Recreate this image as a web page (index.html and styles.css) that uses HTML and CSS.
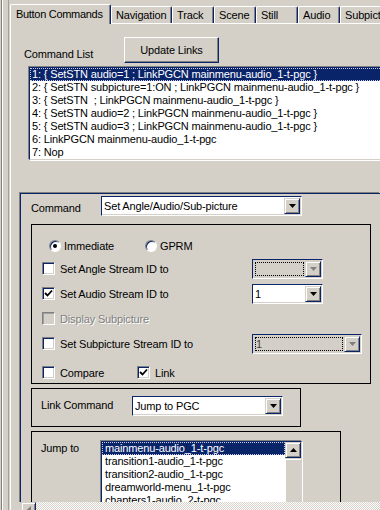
FILE: index.html
```html
<!DOCTYPE html>
<html lang="en">
<head>
    <meta charset="UTF-8">
    <title>Button Commands</title>
    <link rel="stylesheet" href="styles.css">
</head>
<body>

<div class="window">
    <div class="edge"></div>

    <div class="tabctl">
        <!-- Tab strip -->
        <div class="tabs">
            <div class="tab active">Button Commands</div>
            <div class="tab nav">Navigation</div>
            <div class="tab">Track</div>
            <div class="tab">Scene</div>
            <div class="tab">Still</div>
            <div class="tab">Audio</div>
            <div class="tab last">Subpicture</div>
        </div>

        <div class="panel">
            <div class="list-head">
                <span class="label head-label">Command List</span>
                <button class="btn">Update Links</button>
            </div>

            <div class="listbox cmd-list">
                <div class="item sel">1: { SetSTN audio=1 ; LinkPGCN mainmenu-audio_1-t-pgc }</div>
                <div class="item">2: { SetSTN subpicture=1:ON ; LinkPGCN mainmenu-audio_1-t-pgc }</div>
                <div class="item">3: { SetSTN&nbsp; ; LinkPGCN mainmenu-audio_1-t-pgc }</div>
                <div class="item">4: { SetSTN audio=2 ; LinkPGCN mainmenu-audio_1-t-pgc }</div>
                <div class="item">5: { SetSTN audio=3 ; LinkPGCN mainmenu-audio_1-t-pgc }</div>
                <div class="item">6: LinkPGCN mainmenu-audio_1-t-pgc</div>
                <div class="item">7: Nop</div>
            </div>

            <!-- Scrolling editor pane -->
            <div class="pane">
                <div class="pane-view">
                    <div class="group">
                        <div class="cmd-row">
                            <span class="label cmd-label">Command</span>
                            <div class="combo w-cmd">
                                <span class="combo-text">Set Angle/Audio/Sub-picture</span>
                                <span class="combo-btn"><svg width="7" height="4" viewBox="0 0 7 4"><path d="M0 0h7L3.5 4z" fill="#000"/></svg></span>
                            </div>
                        </div>

                        <div class="box opts">
                            <div class="radio-row">
                                <label class="radio-item"><span class="radio on"></span>Immediate</label>
                                <label class="radio-item"><span class="radio"></span>GPRM</label>
                            </div>

                            <div class="opt-row">
                                <label class="check-item"><span class="check"></span>Set Angle Stream ID to</label>
                                <div class="combo w-small disabled">
                                    <span class="combo-text"><span class="focus"></span></span>
                                    <span class="combo-btn"><svg width="7" height="4" viewBox="0 0 7 4"><path d="M0 0h7L3.5 4z" fill="#808080"/></svg></span>
                                </div>
                            </div>

                            <div class="opt-row">
                                <label class="check-item"><span class="check"><svg width="9" height="9" viewBox="0 0 9 9"><path d="M1 4l2.5 2.5L8 1.5" fill="none" stroke="#000" stroke-width="1.8"/></svg></span>Set Audio Stream ID to</label>
                                <div class="combo w-small">
                                    <span class="combo-text">1</span>
                                    <span class="combo-btn"><svg width="7" height="4" viewBox="0 0 7 4"><path d="M0 0h7L3.5 4z" fill="#000"/></svg></span>
                                </div>
                            </div>

                            <div class="opt-row">
                                <label class="check-item off"><span class="check"></span>Display Subpicture</label>
                            </div>

                            <div class="opt-row">
                                <label class="check-item"><span class="check"></span>Set Subpicture Stream ID to</label>
                                <div class="combo w-wide disabled">
                                    <span class="combo-text"><span class="focus">1</span></span>
                                    <span class="combo-btn"><svg width="7" height="4" viewBox="0 0 7 4"><path d="M0 0h7L3.5 4z" fill="#808080"/></svg></span>
                                </div>
                            </div>

                            <div class="flag-row">
                                <label class="check-item flag"><span class="check"></span>Compare</label>
                                <label class="check-item"><span class="check"><svg width="9" height="9" viewBox="0 0 9 9"><path d="M1 4l2.5 2.5L8 1.5" fill="none" stroke="#000" stroke-width="1.8"/></svg></span>Link</label>
                            </div>
                        </div>

                        <div class="box link-box">
                            <span class="label link-label">Link Command</span>
                            <div class="combo w-link">
                                <span class="combo-text">Jump to PGC</span>
                                <span class="combo-btn"><svg width="7" height="4" viewBox="0 0 7 4"><path d="M0 0h7L3.5 4z" fill="#000"/></svg></span>
                            </div>
                        </div>

                        <div class="box jump-box">
                            <span class="label jump-label">Jump to</span>
                            <div class="listbox jump-list">
                                <div class="jump-items">
                                    <div class="item sel">mainmenu-audio_1-t-pgc</div>
                                    <div class="item">transition1-audio_1-t-pgc</div>
                                    <div class="item">transition2-audio_1-t-pgc</div>
                                    <div class="item">dreamworld-menu_1-t-pgc</div>
                                    <div class="item">chapters1-audio_2-t-pgc</div>
                                    <div class="item">chapters2-audio_2-t-pgc</div>
                                </div>
                                <div class="vscroll">
                                    <span class="sb-btn up"><svg width="7" height="4" viewBox="0 0 7 4"><path d="M0 4h7L3.5 0z" fill="#000"/></svg></span>
                                    <span class="sb-thumb"></span>
                                </div>
                            </div>
                        </div>
                    </div>
                </div>

                <div class="hscroll">
                    <span class="sb-btn left"><svg width="4" height="7" viewBox="0 0 4 7"><path d="M4 0v7L0 3.5z" fill="#808080"/></svg></span>
                    <span class="sb-track"></span>
                </div>
            </div>
        </div>
    </div>
</div>

</body>
</html>
```

FILE: styles.css
```css
/* General Styles */
body {
    margin: 0;
    padding: 0;
    background: #d4d0c8;
    font-family: 'Liberation Sans', Arial, sans-serif;
    font-size: 11px;
    letter-spacing: -0.15px;
    color: #000;
    overflow: hidden;
}

.window {
    display: flex;
    width: 380px;
    height: 510px;
    overflow: hidden;
}

/* Splitter lines on the left */
.edge {
    width: 10px;
    flex: none;
    background: linear-gradient(to right,
        #d4d0c8 0 1px, #808080 1px 2px, #fff 2px 3px,
        #d4d0c8 3px 8px, #a0a0a0 8px 9px, #d4d0c8 9px 10px);
}

.tabctl {
    flex: 1;
    min-width: 0;
    display: flex;
    flex-direction: column;
}

/* Tab strip */
.tabs {
    height: 23px;
    display: flex;
    align-items: flex-end;
    flex: none;
}

.tab {
    box-sizing: border-box;
    width: 42px;
    height: 17px;
    padding: 1px 0 0 4px;
    line-height: 14px;
    white-space: nowrap;
    border-top: 1px solid #fff;
    border-left: 1px solid #fff;
    border-right: 1px solid #0a246a;
    border-radius: 2px 2px 0 0;
    box-shadow: inset -1px 0 0 #808080;
    flex: none;
}

.tab.active {
    position: relative;
    z-index: 1;
    width: 101px;
    height: 20px;
    margin-bottom: -1px;
    padding: 2px 0 0 5px;
    background: #d4d0c8;
    letter-spacing: -0.3px;
}

.tab.nav {
    width: 61px;
}

.tab.last {
    width: 60px;
    border-right: none;
    box-shadow: none;
}

.panel {
    flex: 1;
    display: flex;
    flex-direction: column;
    border-top: 1px solid #fff;
    border-left: 1px solid #fff;
    min-height: 0;
}

.label {
    white-space: nowrap;
    line-height: 13px;
}

/* Command list */
.list-head {
    display: flex;
    align-items: flex-end;
    margin-top: 13px;
}

.head-label {
    width: 100px;
    margin-left: 13px;
    padding-bottom: 2px;
}

.btn {
    width: 95px;
    height: 26px;
    padding: 0;
    font: inherit;
    letter-spacing: inherit;
    color: #000;
    background: #d4d0c8;
    border: 1px solid;
    border-color: #fff #0a246a #0a246a #fff;
    box-shadow: inset -1px -1px 0 #808080;
}

.listbox {
    box-sizing: border-box;
    background: #fff;
    border: 1px solid;
    border-color: #0a246a #d4d0c8 #d4d0c8 #0a246a;
    box-shadow: -1px -1px 0 #808080, 1px 1px 0 #fff;
}

.cmd-list {
    margin: 4px 0 0 18px;
    width: 370px;
    height: 93px;
    flex: none;
}

.item {
    height: 13px;
    line-height: 13px;
    padding-left: 2px;
    white-space: nowrap;
}

.item.sel {
    background: #0a246a;
    color: #fff;
    outline: 1px dotted #c8c8e0;
    outline-offset: -1px;
}

/* Editor pane */
.pane {
    flex: 1;
    display: flex;
    flex-direction: column;
    margin: 32px 0 0 8px;
    min-height: 0;
}

.pane-view {
    flex: 1;
    overflow: hidden;
    padding: 1px 0 0 1px;
}

.group {
    height: 400px;
    border-top: 1px solid #0a246a;
    border-left: 1px solid #0a246a;
    box-shadow: -1px -1px 0 #808080;
}

.cmd-row {
    display: flex;
    align-items: flex-end;
    padding: 2px 0 0 10px;
}

.cmd-label {
    width: 70px;
    padding-bottom: 1px;
}

/* Drop-down boxes */
.combo {
    box-sizing: border-box;
    display: flex;
    height: 20px;
    padding: 1px;
    background: #fff;
    border: 1px solid;
    border-color: #0a246a #fff #fff #0a246a;
    box-shadow: inset -1px -1px 0 #d4d0c8;
    flex: none;
}

.combo-text {
    flex: 1;
    min-width: 0;
    line-height: 16px;
    padding-left: 1px;
    white-space: nowrap;
    overflow: hidden;
}

.combo-btn {
    box-sizing: border-box;
    width: 16px;
    height: 16px;
    display: flex;
    align-items: center;
    justify-content: center;
    background: #d4d0c8;
    border: 1px solid;
    border-color: #d4d0c8 #0a246a #0a246a #d4d0c8;
    box-shadow: inset 1px 1px 0 #fff, inset -1px -1px 0 #808080;
}

.combo.disabled {
    background: #d4d0c8;
}

.combo.disabled .combo-text {
    display: flex;
    padding: 1px;
}

.focus {
    flex: 1;
    border: 1px dotted #000;
    line-height: 12px;
    color: #404040;
}

.w-cmd { width: 201px; }
.w-small { width: 71px; }
.w-wide { width: 110px; }
.w-link { width: 151px; }

/* Group boxes */
.box {
    box-sizing: border-box;
    margin-left: 10px;
    border: 1px solid #000;
}

.opts {
    width: 340px;
    height: 160px;
    margin-top: 8px;
}

.radio-row {
    display: flex;
    align-items: center;
    height: 20px;
    margin: 11px 0 0 17px;
}

.radio-item {
    display: flex;
    align-items: center;
    gap: 3px;
    width: 96px;
}

.radio {
    box-sizing: border-box;
    width: 12px;
    height: 12px;
    border-radius: 50%;
    background: #fff;
    border: 1px solid;
    border-color: #808080 #fff #fff #808080;
    box-shadow: inset 1px 1px 0 #0a246a;
    display: flex;
    align-items: center;
    justify-content: center;
}

.radio.on::after {
    content: "";
    width: 4px;
    height: 4px;
    border-radius: 50%;
    background: #000;
}

.opt-row {
    display: flex;
    align-items: center;
    height: 25px;
    padding-left: 10px;
}

.check-item {
    display: flex;
    align-items: center;
    gap: 5px;
    width: 210px;
    white-space: nowrap;
}

.check {
    box-sizing: border-box;
    width: 13px;
    height: 13px;
    background: #fff;
    border: 1px solid;
    border-color: #808080 #fff #fff #808080;
    box-shadow: inset 1px 1px 0 #0a246a, inset -1px -1px 0 #d4d0c8;
    display: flex;
    align-items: center;
    justify-content: center;
    flex: none;
}

.check-item.off {
    color: #808080;
    text-shadow: 1px 1px 0 #fff;
}

.check-item.off .check {
    background: #d4d0c8;
    box-shadow: inset 1px 1px 0 #a0a0a0;
}

.flag-row {
    display: flex;
    align-items: center;
    height: 19px;
    margin-top: 7px;
    padding-left: 10px;
}

.check-item.flag {
    width: 95px;
}

.link-box {
    display: flex;
    align-items: center;
    width: 270px;
    height: 39px;
    margin-top: 4px;
    padding: 0 0 4px 9px;
}

.link-label {
    width: 91px;
}

.jump-box {
    display: flex;
    align-items: flex-start;
    width: 310px;
    height: 120px;
    margin-top: 4px;
    padding: 9px 0 0 9px;
}

.jump-label {
    width: 60px;
    margin-top: 1px;
}

.jump-list {
    display: flex;
    width: 201px;
    height: 100px;
}

.jump-items {
    flex: 1;
    padding-top: 0;
}

.jump-items .item {
    padding-left: 3px;
}

.vscroll {
    width: 16px;
    display: flex;
    flex-direction: column;
    background: #d4d0c8;
}

.sb-btn {
    box-sizing: border-box;
    display: flex;
    align-items: center;
    justify-content: center;
    background: #d4d0c8;
    border: 1px solid;
    border-color: #d4d0c8 #0a246a #0a246a #d4d0c8;
    box-shadow: inset 1px 1px 0 #fff, inset -1px -1px 0 #808080;
    flex: none;
}

.sb-btn.up {
    width: 16px;
    height: 16px;
}

.sb-thumb {
    flex: 1;
    margin-top: 1px;
    border-top: 1px solid #fff;
    border-left: 1px solid #fff;
}

/* Horizontal scroll bar at the bottom */
.hscroll {
    display: flex;
    height: 8px;
    margin-left: 2px;
    flex: none;
    overflow: hidden;
}

.sb-btn.left {
    width: 15px;
    height: 16px;
    align-items: flex-start;
    padding-top: 3px;
}

.sb-track {
    flex: 1;
    background: repeating-conic-gradient(#fff 0 25%, #d4d0c8 0 50%) 0 0 / 2px 2px;
}
```
